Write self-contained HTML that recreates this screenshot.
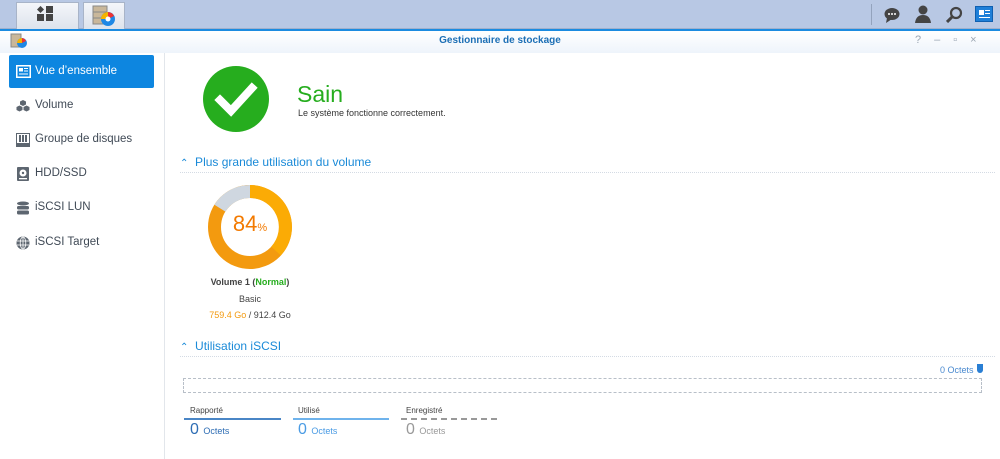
<!DOCTYPE html>
<html><head><meta charset="utf-8"><style>
*{margin:0;padding:0;box-sizing:border-box}
body{width:1000px;height:459px;overflow:hidden;background:#fff;font-family:"Liberation Sans",sans-serif;position:relative;font-size:12px}
.abs{position:absolute}
#top{left:0;top:0;width:1000px;height:29px;background:#b8c8e4;border-bottom:1px solid #9fb0cc}
.tab{top:2px;height:27px;background:linear-gradient(#f4f6fa,#dde3ec);border:1px solid #a8b4c8;border-bottom:none}
#title{left:0;top:29px;width:1000px;height:24px;background:linear-gradient(#fff,#eef4fb);border-top:2px solid #1b8be0}
.nav{left:9px;width:145px;height:33px;color:#404a56;font-size:11.5px;line-height:33px;padding-left:26px}
.ic{position:absolute;left:7px;top:10px;width:14px;height:14px}
.sec{color:#1a8ad8;font-size:12px}
.dash{border-bottom:1px dotted #d4dbe4}
</style></head><body>
<div id="top" class="abs"></div>
<div class="abs tab" style="left:16px;width:63px"></div>
<div class="abs tab" style="left:83px;width:42px"></div>
<svg class="abs" style="left:37px;top:6px" width="18" height="18"><rect x="0" y="8" width="7" height="7" fill="#444"/><rect x="9" y="8" width="7" height="7" fill="#444"/><rect x="9" y="0" width="7" height="7" fill="#444"/><rect x="1" y="1" width="5" height="5" fill="#444" transform="rotate(45 3.5 3.5)"/></svg>
<svg class="abs" style="left:92px;top:5px" width="24" height="22"><rect x="1" y="1" width="14" height="18" fill="#c9b79a" stroke="#888"/><line x1="1" y1="7" x2="15" y2="7" stroke="#888"/><line x1="1" y1="13" x2="15" y2="13" stroke="#888"/><circle cx="16" cy="14" r="7" fill="#1e88e5"/><path d="M16 14 L16 7 A7 7 0 0 1 22 11Z" fill="#e33"/><path d="M16 14 L9 14 A7 7 0 0 1 16 7Z" fill="#f5b400"/><circle cx="16" cy="14" r="2.5" fill="#fff"/></svg>
<div class="abs" style="left:871px;top:4px;width:1px;height:21px;background:#93a3bd"></div>
<svg class="abs" style="left:884px;top:7px" width="16" height="16"><ellipse cx="8" cy="7" rx="7.5" ry="6" fill="#444"/><path d="M3 11 L2 16 L8 12Z" fill="#444"/><circle cx="5" cy="7" r="1" fill="#fff"/><circle cx="8" cy="7" r="1" fill="#fff"/><circle cx="11" cy="7" r="1" fill="#fff"/></svg>
<svg class="abs" style="left:915px;top:5px" width="16" height="18"><circle cx="8" cy="5" r="4.5" fill="#444"/><path d="M0 18 Q1 10 8 10 Q15 10 16 18Z" fill="#444"/></svg>
<svg class="abs" style="left:946px;top:6px" width="17" height="17"><circle cx="10" cy="7" r="5" fill="none" stroke="#444" stroke-width="2.2"/><line x1="6" y1="11" x2="1" y2="16" stroke="#444" stroke-width="3"/></svg>
<div class="abs" style="left:975px;top:6px;width:18px;height:16px;background:#1e7fd8;border:1px solid #0f5fb0"><div class="abs" style="left:3px;top:3px;width:5px;height:5px;background:#fff"></div><div class="abs" style="left:9px;top:3px;width:5px;height:1px;background:#fff"></div><div class="abs" style="left:9px;top:6px;width:5px;height:1px;background:#fff"></div><div class="abs" style="left:3px;top:10px;width:11px;height:1px;background:#fff"></div></div>
<div id="title" class="abs"></div>
<svg class="abs" style="left:10px;top:33px" width="18" height="16"><rect x="1" y="1" width="10" height="13" fill="#c9b79a" stroke="#888"/><circle cx="12" cy="10" r="5" fill="#1e88e5"/><path d="M12 10 L12 5 A5 5 0 0 1 16 8Z" fill="#e33"/><path d="M12 10 L7 10 A5 5 0 0 1 12 5Z" fill="#f5b400"/></svg>
<div class="abs" style="left:0;top:35px;width:1000px;text-align:center;color:#1c6fb5;font-size:10px;font-weight:bold">Gestionnaire de stockage</div>
<div class="abs" style="left:915px;top:34px;color:#9aa5b2;font-size:11px;letter-spacing:13px">?–▫×</div>
<div class="abs" style="left:164px;top:53px;width:1px;height:406px;background:#e2e6eb"></div>
<div class="abs nav" style="top:55px;background:#0d86e0;color:#fff;border-radius:2px"><svg class="ic" viewBox="0 0 15 13" style="width:15px;height:13px;top:10px"><rect x="0.75" y="0.75" width="13.5" height="11.5" fill="none" stroke="#fff" stroke-width="1.5"/><rect x="3" y="3" width="4" height="3.5" fill="#fff"/><rect x="8" y="3" width="4" height="1" fill="#fff"/><rect x="8" y="5.5" width="4" height="1" fill="#fff"/><rect x="3" y="8.5" width="9" height="1" fill="#fff"/></svg>Vue d’ensemble</div>
<div class="abs nav" style="top:89px"><svg class="ic" viewBox="0 0 14 14"><path d="M7 1l3 1.5v3L7 7 4 5.5v-3zM3.5 6.5l3 1.5v3l-3 1.5-3-1.5v-3zM10.5 6.5l3 1.5v3l-3 1.5-3-1.5v-3z" fill="#5d6670"/></svg>Volume</div>
<div class="abs nav" style="top:123px"><svg class="ic" viewBox="0 0 14 14"><rect x="0.5" y="0.5" width="13" height="13" fill="none" stroke="#5d6670"/><rect x="3" y="2" width="2" height="7" fill="#5d6670"/><rect x="6" y="2" width="2" height="7" fill="#5d6670"/><rect x="9" y="2" width="2" height="7" fill="#5d6670"/><rect x="1" y="10" width="12" height="3" fill="#5d6670"/></svg>Groupe de disques</div>
<div class="abs nav" style="top:157px"><svg class="ic" viewBox="0 0 14 14"><rect x="1" y="0" width="12" height="14" rx="1" fill="#5d6670"/><circle cx="7" cy="6" r="3.5" fill="#fff"/><circle cx="7" cy="6" r="1.2" fill="#5d6670"/><rect x="3" y="11" width="8" height="1.3" fill="#fff"/></svg>HDD/SSD</div>
<div class="abs nav" style="top:191px"><svg class="ic" viewBox="0 0 14 14"><ellipse cx="7" cy="2.5" rx="6" ry="2" fill="#5d6670"/><rect x="1" y="5" width="12" height="3.5" rx="1.5" fill="#5d6670"/><rect x="1" y="9.5" width="12" height="4" rx="1.5" fill="#5d6670"/></svg>iSCSI LUN</div>
<div class="abs nav" style="top:226px"><svg class="ic" viewBox="0 0 14 14"><circle cx="7" cy="7" r="6.5" fill="#5d6670"/><g stroke="#fff" stroke-width="0.8" fill="none"><ellipse cx="7" cy="7" rx="2.8" ry="6"/><line x1="7" y1="1" x2="7" y2="13"/><line x1="1" y1="5" x2="13" y2="5"/><line x1="1" y1="9" x2="13" y2="9"/></g></svg>iSCSI Target</div>
<svg class="abs" style="left:203px;top:66px" width="66" height="66"><circle cx="33" cy="33" r="33" fill="#26ad1e"/><path d="M17 34 L28 45 L49 22" stroke="#fff" stroke-width="8" fill="none" stroke-linecap="square"/></svg>
<div class="abs" style="left:297px;top:81px;color:#26ad1e;font-size:23px">Sain</div>
<div class="abs" style="left:298px;top:108px;color:#333;font-size:9px">Le système fonctionne correctement.</div>
<div class="abs sec dash" style="left:180px;top:155px;width:815px;height:18px"><span style="font-size:10px">⌃</span>&nbsp; Plus grande utilisation du volume</div>
<svg class="abs" style="left:208px;top:185px" width="84" height="84" viewBox="-42 -42 84 84"><circle r="35.5" fill="none" stroke="#f39a0f" stroke-width="13"/><path d="M0 -35.5 A35.5 35.5 0 0 1 26 24" fill="none" stroke="#fbab05" stroke-width="13"/><path d="M0 -35.5 A35.5 35.5 0 0 0 -30.1 -18.8" fill="none" stroke="#cfd7e0" stroke-width="13"/></svg>
<div class="abs" style="left:210px;top:211px;width:80px;text-align:center;color:#f37a00;font-size:22px">84<span style="font-size:11px">%</span></div>
<div class="abs" style="left:190px;top:277px;width:120px;text-align:center;font-size:9px;font-weight:bold;color:#444">Volume 1 (<span style="color:#26ad1e">Normal</span>)</div>
<div class="abs" style="left:190px;top:294px;width:120px;text-align:center;font-size:9px;color:#444">Basic</div>
<div class="abs" style="left:190px;top:310px;width:120px;text-align:center;font-size:9px;color:#444"><span style="color:#f39a0f">759.4 Go</span> / 912.4 Go</div>
<div class="abs sec dash" style="left:180px;top:339px;width:815px;height:18px"><span style="font-size:10px">⌃</span>&nbsp; Utilisation iSCSI</div>
<div class="abs" style="left:940px;top:365px;font-size:9px;color:#4a8ad0">0 Octets</div>
<div class="abs" style="left:977px;top:364px;width:6px;height:9px;background:#2a7fd4;border-radius:0 0 3px 3px"></div>
<div class="abs" style="left:183px;top:378px;width:799px;height:15px;border:1px dashed #b8bfc8"></div>
<div class="abs" style="left:190px;top:406px;font-size:8px;color:#444">Rapporté</div>
<div class="abs" style="left:298px;top:406px;font-size:8px;color:#444">Utilisé</div>
<div class="abs" style="left:406px;top:406px;font-size:8px;color:#444">Enregistré</div>
<div class="abs" style="left:184px;top:418px;width:97px;height:2px;background:#4a86c6"></div>
<div class="abs" style="left:293px;top:418px;width:96px;height:2px;background:#6fb3ec"></div>
<div class="abs" style="left:401px;top:418px;width:96px;border-top:2px dashed #999"></div>
<div class="abs" style="left:190px;top:421px;font-size:16px;color:#2e6db4">0 <span style="font-size:9px">Octets</span></div>
<div class="abs" style="left:298px;top:421px;font-size:16px;color:#4a9be4">0 <span style="font-size:9px">Octets</span></div>
<div class="abs" style="left:406px;top:421px;font-size:16px;color:#999">0 <span style="font-size:9px">Octets</span></div>
</body></html>
